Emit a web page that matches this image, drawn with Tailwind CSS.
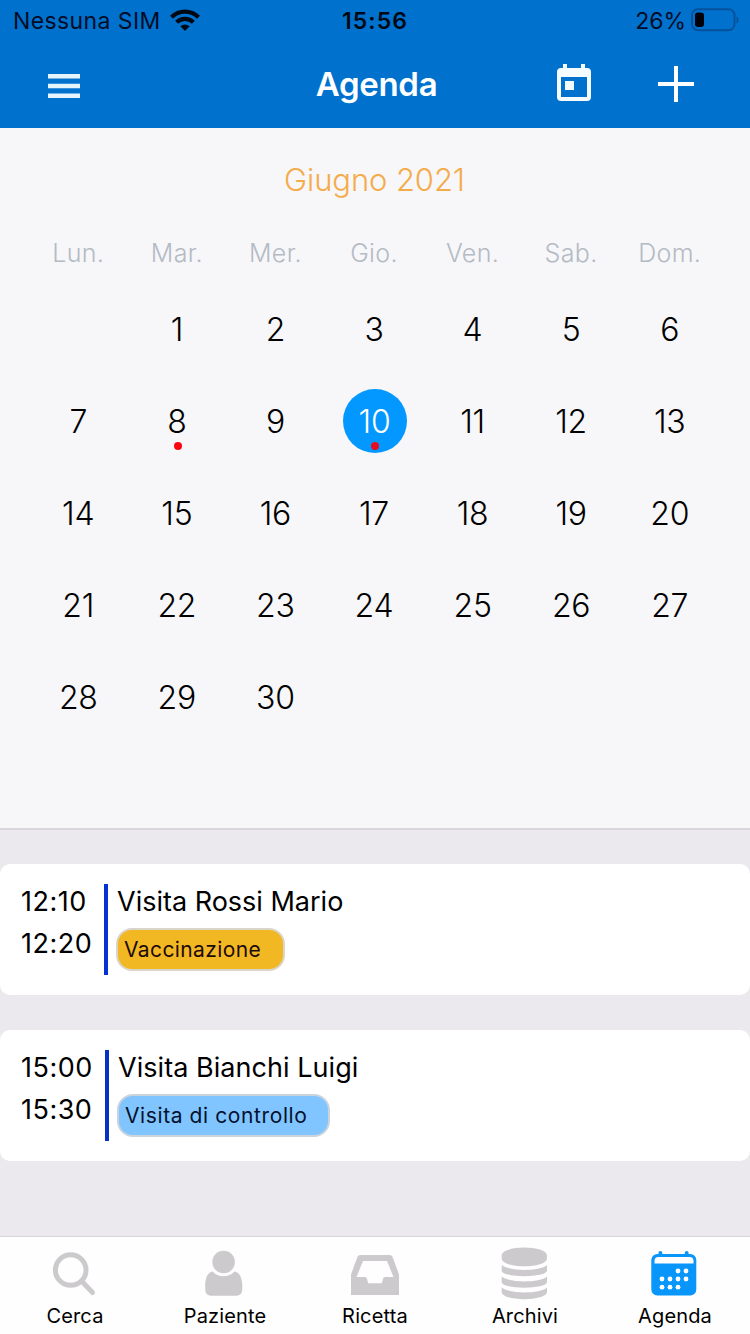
<!DOCTYPE html>
<html lang="it">
<head>
<meta charset="utf-8">
<title>Agenda</title>
<script src="https://cdn.jsdelivr.net/npm/@tailwindcss/browser@4"></script>
</head>
<body class="flex h-[1334px] w-[750px] flex-col overflow-hidden bg-[#ebe9ed] font-['Inter','Liberation_Sans',sans-serif] text-black">
  <header class="h-32 bg-[#0072ce]">
    <div class="grid h-10 grid-cols-3 items-center pr-[11px] pl-[13px] text-[#020c26]">
      <div class="flex items-center gap-[9px]">
        <span class="pt-px text-[23px] leading-10 tracking-[0.4px] whitespace-nowrap">Nessuna SIM</span>
        <svg class="mb-[2px] h-[22px] w-[30px]" viewBox="0 0 30 22" fill="none" stroke="#000814" stroke-width="4.200">
          <path d="M1.500 8.200a19.200 19.200 0 0 1 27 0M6.600 13.300a12 12 0 0 1 16.800 0"/>
          <path d="M15 22l-4.600-4.700a6.600 6.600 0 0 1 9.200 0z" fill="#000814" stroke="none"/>
        </svg>
      </div>
      <span class="pt-px pr-[2px] text-center text-[23px] leading-10 font-semibold tracking-[1.100px] text-[#000814]">15:56</span>
      <div class="flex items-center justify-end gap-[5px]">
        <span class="pt-px text-[23px] leading-10">26%</span>
        <svg class="mb-px h-6 w-[48px]" viewBox="0 0 48 24">
          <rect x="1" y="1.300" width="42.500" height="21" rx="6" fill="none" stroke="#06529a" stroke-width="2"/>
          <rect x="4" y="4.500" width="9" height="14.500" rx="3" fill="#000008"/>
          <path d="M45.500 8.500c2.700 1 2.700 6 0 7z" fill="#06529a"/>
        </svg>
      </div>
    </div>
    <div class="grid h-[88px] grid-cols-3 items-center px-12 text-white">
      <svg class="mt-1 h-6 w-8" viewBox="0 0 32 24" fill="#e6f5fc"><path d="M0 0h32v4.500H0zM0 9.700h32v4.500H0zM0 19.400h32V24H0z"/></svg>
      <span class="pl-[3px] text-center text-[33px] leading-[88px] font-semibold tracking-[-0.3px]">Agenda</span>
      <div class="flex items-center justify-end gap-[67px] pr-2">
        <svg class="mb-[3px] h-[37px] w-[34px]" viewBox="0 0 34 37" fill="#f5fcff">
          <path fill-rule="evenodd" d="M6 0h4v4h14V0h4v4h2a4 4 0 0 1 4 4v25a4 4 0 0 1-4 4H4a4 4 0 0 1-4-4V8a4 4 0 0 1 4-4h2zM4 13v20h26V13zM8 17h9v9H8z"/>
        </svg>
        <svg class="h-9 w-9" viewBox="0 0 36 36" fill="#fff"><path d="M16 0h4v16h16v4H20v16h-4V20H0v-4h16z"/></svg>
      </div>
    </div>
  </header>

  <main class="flex-1">
    <section class="h-[702px] border-b-2 border-[#d8d6da] bg-[#f7f6f9] pr-[31px] pl-[29px]">
      <h1 class="h-[104px] pl-px text-center text-[31px] leading-[104px] font-light tracking-[-0.1px] text-[#f4ac4b]">Giugno 2021</h1>
      <div class="grid h-[52px] grid-cols-7 text-center text-[25px] leading-[43px] font-light tracking-[0.35px] text-[#b3bbc4]">
        <span>Lun.</span><span>Mar.</span><span>Mer.</span><span>Gio.</span><span>Ven.</span><span>Sab.</span><span>Dom.</span>
      </div>
      <div class="grid auto-rows-[92px] grid-cols-7 text-center text-[32px] leading-[92px] font-light tracking-[-0.2px]">
        <span></span><span>1</span><span>2</span><span>3</span><span>4</span><span>5</span><span>6</span>
        <span>7</span>
        <span class="relative">8<i class="absolute top-[66px] left-1/2 ml-px size-2 -translate-x-1/2 rounded-full bg-[#fa0510]"></i></span>
        <span>9</span>
        <span class="relative left-px mx-auto mt-[13px] size-16 rounded-full bg-[#0398ff] pr-px leading-[66px] text-white">10<i class="absolute top-[53px] left-1/2 size-2 -translate-x-1/2 rounded-full bg-[#e80a1e]"></i></span>
        <span>11</span><span>12</span><span>13</span>
        <span>14</span><span>15</span><span>16</span><span>17</span><span>18</span><span>19</span><span>20</span>
        <span>21</span><span>22</span><span>23</span><span>24</span><span>25</span><span>26</span><span>27</span>
        <span>28</span><span>29</span><span>30</span>
      </div>
    </section>

    <section class="flex flex-col gap-[35px] pt-[34px]">
      <article class="flex h-[131px] rounded-[10px] bg-white pt-5 pl-[21px]">
        <div class="-mt-[3px] w-[83px] text-[27px] leading-[42px] tracking-[0.5px]"><p>12:10</p><p>12:20</p></div>
        <div class="h-[91px] w-1 bg-[#0732d2]"></div>
        <div class="pl-2">
          <h2 class="h-11 pl-px text-[27px] leading-9">Visita Rossi Mario</h2>
          <span class="flex h-[43px] w-[169px] rounded-[16px] border-2 border-[#dad5c8] bg-[#f2b824] pl-[6px] text-[21px] leading-[39px] tracking-[0.4px] whitespace-nowrap text-[#1d0b0a]">Vaccinazione</span>
        </div>
      </article>
      <article class="flex h-[131px] rounded-[10px] bg-white pt-5 pl-[21px]">
        <div class="-mt-[3px] w-[84px] text-[27px] leading-[42px] tracking-[0.5px]"><p>15:00</p><p>15:30</p></div>
        <div class="h-[91px] w-1 bg-[#0730c4]"></div>
        <div class="pl-2">
          <h2 class="h-11 pl-px text-[27px] leading-9 tracking-[0.05px]">Visita Bianchi Luigi</h2>
          <span class="flex h-[43px] w-[213px] rounded-[16px] border-2 border-[#cbd3dc] bg-[#80c5ff] pl-[6px] text-[21px] leading-[39px] tracking-[0.6px] whitespace-nowrap text-[#03112d]">Visita di controllo</span>
        </div>
      </article>
    </section>
  </main>

  <nav class="grid h-[98px] grid-cols-5 border-t border-[#d7d6db] bg-[#fefefe] text-center text-[20px] leading-6 tracking-[0.15px]">
    <a class="flex flex-col items-center">
      <svg class="h-[67px] w-[60px]" viewBox="0 0 60 67" fill="none" stroke="#cccacd" stroke-width="5">
        <circle cx="25.700" cy="33" r="15.300"/><path d="M37 44.500l10.500 11" stroke-linecap="round"/>
      </svg><span>Cerca</span>
    </a>
    <a class="flex flex-col items-center">
      <svg class="h-[67px] w-[60px]" viewBox="0 0 60 67" fill="#cccacd">
        <circle cx="28.600" cy="25" r="11.300"/>
        <path d="M17.500 34.500a15 15 0 0 0 22 0c5.500 1 7.800 7 7.800 14.500v2.500c0 5-2 7.300-7 7.300H17.200c-5 0-7-2.300-7-7.300V49c0-7.500 2-13.500 7.300-14.500z"/>
      </svg><span>Paziente</span>
    </a>
    <a class="flex flex-col items-center">
      <svg class="h-[67px] w-[60px]" viewBox="0 0 60 67" fill="#cccacd">
        <path fill-rule="evenodd" d="M15.500 18h29c1.500 0 2.500.8 3.200 2.200L54 37.500V58H6V37.500l6.300-17.300C13 18.800 14 18 15.500 18zM18 24l-6.500 16H19.500c1.600 0 2.200.8 2.600 2.200l1.100 4.100h13.600l1.100-4.100c.4-1.400 1-2.200 2.600-2.200h8L42 24z"/>
      </svg><span>Ricetta</span>
    </a>
    <a class="flex flex-col items-center">
      <svg class="h-[67px] w-[60px]" viewBox="0 0 60 67" fill="#cccacd">
        <path d="M6.700 18.700c0-10.800 45.300-10.800 45.300 0v2.500c0 10.800-45.300 10.800-45.300 0zM6.700 28c7 6.600 38.300 6.600 45.300 0v5.500c0 7.500-45.300 7.500-45.300 0zM6.700 39.500c7 6.600 38.300 6.600 45.300 0V45c0 7.500-45.300 7.500-45.300 0zM6.700 50.500c7 6.600 38.300 6.600 45.300 0v4.500c0 9.500-45.300 9.500-45.300 0z"/>
      </svg><span>Archivi</span>
    </a>
    <a class="flex flex-col items-center">
      <svg class="h-[67px] w-[60px]" viewBox="0 0 60 67" fill="#0896fb">
        <path d="M13.500 15.800a1.900 1.900 0 0 1 3.800 0V17h22.500v-1.200a1.900 1.900 0 0 1 3.800 0V17h1.700a6 6 0 0 1 6 6v29.500a6 6 0 0 1-6 6H12.300a6 6 0 0 1-6-6V23a6 6 0 0 1 6-6h1.200z"/>
        <path d="M9.500 26.500V24a4 4 0 0 1 4-4h31a4 4 0 0 1 4 4v2.500z" fill="#fefefe"/>
        <g fill="#fefefe"><circle cx="33" cy="34" r="2.400"/><circle cx="41" cy="34" r="2.400"/><circle cx="17" cy="42" r="2.400"/><circle cx="25" cy="42" r="2.400"/><circle cx="33" cy="42" r="2.400"/><circle cx="41" cy="42" r="2.400"/><circle cx="17" cy="50.200" r="2.400"/><circle cx="25" cy="50.200" r="2.400"/><circle cx="33" cy="50.200" r="2.400"/></g>
      </svg><span>Agenda</span>
    </a>
  </nav>
</body>
</html>
